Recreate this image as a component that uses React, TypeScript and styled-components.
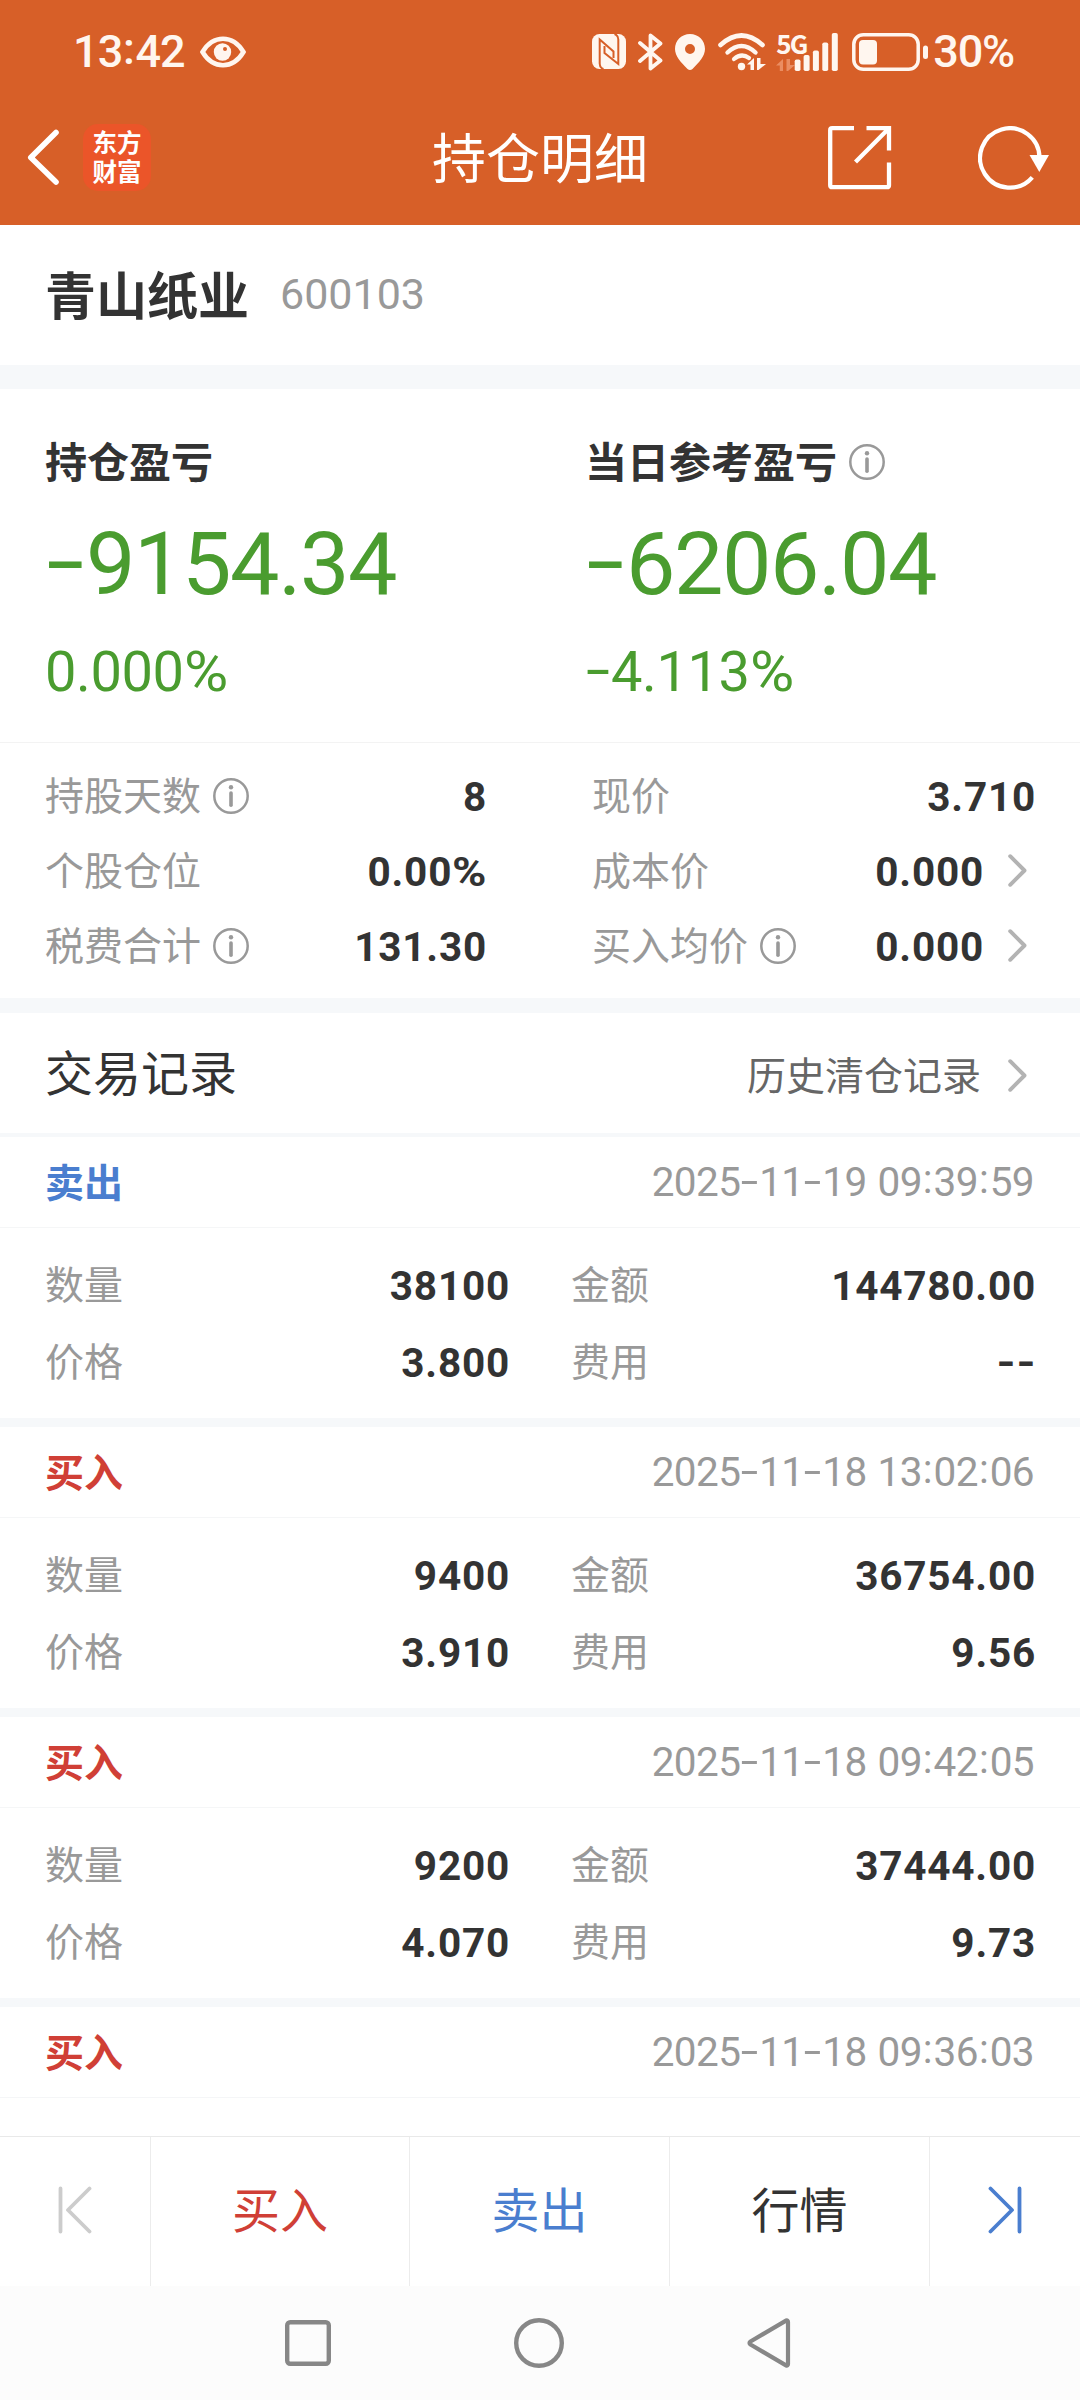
import React from "react";
import styled, { createGlobalStyle } from "styled-components";

const CJK = `"Noto Sans CJK SC", "Noto Sans", sans-serif`;
const NUM = `Roboto, "Noto Sans CJK SC", sans-serif`;

const GlobalStyle = createGlobalStyle`
  * { box-sizing: border-box; }
  body { margin: 0; background: #ffffff; }
`;

const Screen = styled.div`
  display: flex;
  flex-direction: column;
  width: 1080px;
  height: 2400px;
  overflow: hidden;
  background: #ffffff;
  color: #333333;
  font-family: ${CJK};
`;

/* ---------- text ---------- */

/* Lifts ideographs so that they sit on the optical centre of their row. */
const Han = styled.span`
  display: block;
  padding-bottom: 0.11em;
`;

const FigureText = styled.span<{
  $size: number;
  $weight?: number;
  $color?: string;
  $spacing?: number;
  $drop?: number;
}>`
  padding-top: ${(p) => p.$drop ?? 0}px;
  font-family: ${NUM};
  font-size: ${(p) => p.$size}px;
  font-weight: ${(p) => p.$weight ?? 400};
  color: ${(p) => p.$color ?? "#333333"};
  letter-spacing: ${(p) => p.$spacing ?? 0}px;
  word-spacing: 1.5px;
  line-height: 1;
  white-space: nowrap;
`;

const Dash = styled.span<{ $bold: boolean }>`
  display: inline-block;
  width: ${(p) => (p.$bold ? 0.5 : 0.465)}em;
  letter-spacing: 0;
  text-align: center;
  transform: translateY(-0.03em) scaleX(${(p) => (p.$bold ? 1.2 : 1.55)});
`;

const Colon = styled.span`
  display: inline-block;
  width: 0.29em;
  letter-spacing: 0;
  text-align: center;
  transform: translateY(-0.07em);
`;

const Percent = styled.span<{ $bold: boolean }>`
  display: inline-block;
  letter-spacing: 0;
  transform: scaleX(${(p) => (p.$bold ? 1.15 : 1.08)});
  transform-origin: left;
  margin-right: ${(p) => (p.$bold ? 0.12 : 0.06)}em;
`;

type FigureProps = {
  text: string;
  size: number;
  weight?: number;
  color?: string;
  spacing?: number;
  drop?: number;
};

function Figure({ text, size, weight = 400, color, spacing, drop }: FigureProps) {
  return (
    <FigureText $size={size} $weight={weight} $color={color} $spacing={spacing} $drop={drop}>
      {text.split(/([-:%])/).map((part, i) => {
        if (part === "-") return <Dash key={i} $bold={weight > 500}>-</Dash>;
        if (part === ":") return <Colon key={i}>:</Colon>;
        if (part === "%" && weight !== 500) return <Percent key={i} $bold={weight > 500}>%</Percent>;
        return part;
      })}
    </FigureText>
  );
}

/* ---------- header ---------- */

const Header = styled.header`
  display: flex;
  flex-direction: column;
  flex: none;
  height: 225px;
  background: #d75f28;
`;

const StatusBar = styled.div`
  display: flex;
  align-items: center;
  justify-content: space-between;
  height: 89px;
  padding: 14px 66px 0 73px;
`;

const StatusGroup = styled.div<{ $gap: number }>`
  display: flex;
  align-items: center;
  gap: ${(p) => p.$gap}px;
`;

const Spacer = styled.i<{ $w: number }>`
  margin-left: ${(p) => p.$w}px;
`;

const NavBar = styled.div`
  display: grid;
  grid-template-columns: 1fr auto 1fr;
  align-items: center;
  height: 136px;
`;

const NavLeft = styled.div`
  display: flex;
  align-items: center;
  gap: 24px;
  padding-left: 27px;
`;

const NavRight = styled.div`
  display: flex;
  align-items: center;
  justify-content: flex-end;
  gap: 86px;
  padding: 1px 30px 0 0;
`;

const Title = styled.h1`
  margin: 0;
  padding-bottom: 2px;
  color: #ffffff;
  font-size: 54px;
  font-weight: 400;
  line-height: 70px;
`;

const Logo = styled.div`
  display: flex;
  flex-direction: column;
  align-items: center;
  justify-content: center;
  width: 68px;
  height: 67px;
  padding-top: 2px;
  border-radius: 15px;
  background: #eb5529;
  color: #ffffff;
  font-family: ${NUM};
  font-size: 24.5px;
  font-weight: 700;
  line-height: 29px;
`;

/* ---------- body ---------- */

const Band = styled.div<{ $h: number }>`
  flex: none;
  height: ${(p) => p.$h}px;
  background: #f6f8fa;
`;

const StockHead = styled.section`
  display: flex;
  align-items: center;
  flex: none;
  gap: 31px;
  height: 140px;
  padding: 0 46px 5px 45px;
`;

const StockName = styled.h2`
  margin: 0;
  font-size: 51px;
  font-weight: 700;
  line-height: 60px;
`;

const Profit = styled.section`
  display: grid;
  grid-template-columns: 540px 1fr;
  flex: none;
  height: 354px;
  padding: 49px 45px 0;
  border-bottom: 1px solid #f3f3f3;
`;

const ProfitCell = styled.div`
  display: flex;
  flex-direction: column;
  align-items: flex-start;
`;

const ProfitLabel = styled.div`
  display: flex;
  align-items: center;
  gap: 12px;
  height: 48px;
  font-size: 42px;
  font-weight: 700;
  line-height: 46px;
`;

const ProfitValue = styled.div`
  display: flex;
  align-items: center;
  height: 100px;
  margin-top: 28px;
`;

const ProfitRate = styled.div`
  display: flex;
  align-items: center;
  height: 60px;
  margin-top: 27px;
`;

const Details = styled.section`
  display: grid;
  grid-template-columns: 440px 442px;
  justify-content: space-between;
  grid-auto-rows: 75px;
  flex: none;
  height: 255px;
  padding: 15px 46px 0 45px;
`;

const Pair = styled.div`
  display: flex;
  align-items: center;
  justify-content: space-between;
`;

const Label = styled.span<{ $color?: string }>`
  display: flex;
  align-items: center;
  gap: 12px;
  color: ${(p) => p.$color ?? "#999999"};
  font-size: 39px;
  line-height: 44px;
  white-space: nowrap;
`;

const ValueLink = styled.span`
  display: flex;
  align-items: center;
  gap: 26px;
  padding-right: 7px;
`;

const BoldWrap = styled.span`
  display: flex;
  margin-right: -2px;
`;

const SectionHead = styled.section`
  display: flex;
  align-items: center;
  justify-content: space-between;
  flex: none;
  height: 120px;
  padding: 0 53px 0 45px;
`;

const SectionTitle = styled.h3`
  margin: 0;
  font-size: 48px;
  font-weight: 400;
  line-height: 60px;
`;

const MoreLink = styled.span`
  display: flex;
  align-items: center;
  gap: 27px;
  padding-top: 5px;
`;

const Records = styled.main`
  flex: 1;
  min-height: 0;
  overflow: hidden;
`;

const RecordHead = styled.div`
  display: flex;
  align-items: center;
  justify-content: space-between;
  height: 91px;
  padding: 0 46px 0 45px;
  border-bottom: 1px solid #f5f6f7;
`;

const Side = styled.span<{ $color: string }>`
  color: ${(p) => p.$color};
  font-size: 39px;
  font-weight: 700;
  line-height: 44px;
`;

const RecordBody = styled.div`
  display: grid;
  grid-template-columns: 463px 463px;
  justify-content: space-between;
  grid-auto-rows: 77px;
  height: 190px;
  padding: 18px 46px 0 45px;
`;

const ActionBar = styled.footer`
  display: grid;
  grid-template-columns: 151px 259px 260px 260px 150px;
  flex: none;
  height: 150px;
  border-top: 1px solid #e9e9e9;
  background: #ffffff;
`;

const Action = styled.div<{ $color?: string; $last?: boolean }>`
  display: flex;
  align-items: center;
  justify-content: center;
  padding-bottom: 3px;
  border-right: ${(p) => (p.$last ? "none" : "1px solid #ececec")};
  color: ${(p) => p.$color ?? "#333333"};
  font-size: 48px;
  line-height: 56px;
`;

const SystemNav = styled.nav`
  display: flex;
  align-items: center;
  justify-content: center;
  flex: none;
  gap: 183px;
  height: 114px;
  padding-right: 4px;
  background: #fcfcfc;
`;

/* ---------- icons ---------- */

const STATUS = "#fff6ef";

const EyeIcon = () => (
  <svg width="46" height="32" viewBox="0 0 46 32" fill="none">
    <path d="M2.5 16C8 7 15 2.8 23 2.8S38 7 43.500 16C38 25 31 29.200 23 29.200S8 25 2.500 16Z" stroke={STATUS} strokeWidth="4.6" />
    <circle cx="22.500" cy="16" r="8.700" fill={STATUS} />
    <circle cx="25" cy="13" r="2" fill="#d75f28" />
  </svg>
);

const NfcIcon = () => (
  <svg width="34" height="35" viewBox="0 0 34 35">
    <rect width="34" height="35" rx="7.500" fill={STATUS} />
    <path d="M11.500 35C8.500 34 7.700 32 7.700 29.500V5.500L21.500 17.500V24" fill="none" stroke="#d75f28" strokeWidth="2" />
    <path d="M22.500 0C25.500 1 26.300 3 26.300 5.500V30L12.500 19V12" fill="none" stroke="#d75f28" strokeWidth="2" />
  </svg>
);

const BluetoothIcon = () => (
  <svg width="26" height="38" viewBox="0 0 26 38" fill="none">
    <path d="M2 10L22.500 27.500L12.500 35.500V2.500L22.500 10.500L2 28" stroke={STATUS} strokeWidth="3.800" strokeLinejoin="round" strokeLinecap="round" />
  </svg>
);

const PinIcon = () => (
  <svg width="30" height="36" viewBox="0 0 30 36">
    <path fillRule="evenodd" fill={STATUS} d="M15 0C6.500 0 0 6.500 0 15C0 22 6 28.500 12.500 35Q15 37 17.500 35C24 28.500 30 22 30 15C30 6.500 23.500 0 15 0ZM15 10A5 5 0 1 1 15 20A5 5 0 1 1 15 10Z" />
  </svg>
);

const WifiIcon = () => (
  <svg width="48" height="38" viewBox="0 0 48 38" fill="none">
    <path d="M2.500 12Q23.500 -7 44.500 12" stroke={STATUS} strokeWidth="4.600" strokeLinecap="round" />
    <path d="M9.500 19.500Q23.500 6.500 37.500 19.500" stroke={STATUS} strokeWidth="4.400" strokeLinecap="round" />
    <path d="M16 26Q23.500 19.500 31 25" stroke={STATUS} strokeWidth="4.200" strokeLinecap="round" />
    <circle cx="23.500" cy="33.500" r="3.700" fill={STATUS} />
    <path d="M29 31.500L36 25V37H32.500V31.500ZM39 25V37H40.500L48 31H42.500V25Z" fill={STATUS} />
  </svg>
);

const NetBox = styled.div`
  display: flex;
  flex-direction: column;
  justify-content: space-between;
  width: 27px;
  height: 38px;
`;

const NetLabel = styled.span`
  color: ${STATUS};
  font-family: "Noto Sans CJK SC", sans-serif;
  font-size: 26px;
  font-weight: 700;
  letter-spacing: -2px;
  line-height: 20px;
  white-space: nowrap;
`;

const DataArrows = () => (
  <svg width="19" height="12" viewBox="0 0 19 12">
    <path d="M0 6.500L7 0V12H3.800V6.500ZM10.500 0V12H12L19 6H14V0Z" fill="#ea8d62" />
  </svg>
);

const SignalIcon = () => (
  <svg width="44" height="38" viewBox="796 31.500 44 38" fill={STATUS}>
    <rect x="796.700" y="58" width="5.800" height="11.500" rx="1.800" />
    <rect x="805.600" y="53.500" width="6" height="16" rx="1.800" />
    <rect x="814.900" y="49" width="6" height="20.500" rx="1.800" />
    <rect x="824.300" y="41" width="5.900" height="28.500" rx="1.800" />
    <rect x="833.800" y="31.500" width="6" height="38" rx="1.800" />
  </svg>
);

const BatteryIcon = () => (
  <svg width="76" height="38" viewBox="0 0 76 38" fill="none">
    <rect x="1.800" y="1.800" width="64.400" height="34.400" rx="9.500" stroke={STATUS} strokeWidth="3.500" />
    <rect x="7" y="7" width="18" height="24.500" rx="4" fill={STATUS} />
    <rect x="71" y="12.500" width="5" height="13.500" rx="2.500" fill={STATUS} />
  </svg>
);

const BackIcon = () => (
  <svg width="32" height="56" viewBox="0 0 32 56" fill="none">
    <path d="M29 3.500L3.800 28.500L29 53" stroke="#fff" strokeWidth="5.600" strokeLinecap="round" strokeLinejoin="round" />
  </svg>
);

const ShareIcon = () => (
  <svg width="64" height="64" viewBox="0 0 64 64" fill="none" stroke="#fff" strokeWidth="4.300">
    <path d="M26 2.200H4.200Q2.200 2.200 2.200 4.200V59.200Q2.200 61.200 4.200 61.200H59Q61 61.200 61 59.200V36.500" />
    <path d="M38.500 2.200H61V24.500M61 2.200L27.500 36" />
  </svg>
);

const RefreshIcon = () => (
  <svg width="72" height="64" viewBox="0 0 72 64" fill="none">
    <path d="M54.300 51.300A29.700 29.700 0 1 1 61.500 32" stroke="#fff" strokeWidth="4.200" />
    <path d="M51.500 29H71L61.300 46Z" fill="#fff" />
  </svg>
);

const InfoIcon = () => (
  <svg width="36" height="36" viewBox="0 0 36 36" fill="none">
    <circle cx="18" cy="18" r="16.700" stroke="#999" strokeWidth="2.500" />
    <circle cx="18" cy="9.300" r="2.200" fill="#999" />
    <path d="M18 15V27.200" stroke="#999" strokeWidth="3.600" strokeLinecap="round" />
  </svg>
);

const ChevronIcon = () => (
  <svg width="19" height="33" viewBox="0 0 19 33" fill="none">
    <path d="M2.200 2.200L16.500 16.500L2.200 30.800" stroke="#b3b3b3" strokeWidth="3.900" strokeLinecap="round" strokeLinejoin="round" />
  </svg>
);

const EndIcon = ({ color, flip }: { color: string; flip?: boolean }) => (
  <svg width="34" height="48" viewBox="0 0 34 48" fill="none">
    <g transform={flip ? "translate(34 0) scale(-1 1)" : undefined}>
      <path d="M2.500 2.500V45.500M31.500 2.500L10 24L31.500 45.500" stroke={color} strokeWidth="3.800" strokeLinecap="round" strokeLinejoin="round" />
    </g>
  </svg>
);

const RecentsIcon = () => (
  <svg width="46" height="46" viewBox="0 0 46 46" fill="none">
    <rect x="2.200" y="2.200" width="41.600" height="41.600" rx="3" stroke="#878787" strokeWidth="4.400" />
  </svg>
);

const HomeIcon = () => (
  <svg width="50" height="50" viewBox="0 0 50 50" fill="none">
    <circle cx="25" cy="25" r="22.800" stroke="#878787" strokeWidth="4.400" />
  </svg>
);

const ReturnIcon = () => (
  <svg width="44" height="50" viewBox="0 0 44 50" fill="none">
    <path d="M39 2.600Q41 2 41 4V46Q41 48 39 47.400L3.500 26.500Q1.500 25 3.500 23.500Z" stroke="#878787" strokeWidth="4.200" strokeLinejoin="round" />
  </svg>
);

/* ---------- data ---------- */

type Detail = { label: string; value: string; info?: boolean; link?: boolean };

const details: Detail[] = [
  { label: "持股天数", value: "8", info: true },
  { label: "现价", value: "3.710" },
  { label: "个股仓位", value: "0.00%" },
  { label: "成本价", value: "0.000", link: true },
  { label: "税费合计", value: "131.30", info: true },
  { label: "买入均价", value: "0.000", info: true, link: true },
];

type Trade = {
  side: "买入" | "卖出";
  time: string;
  qty: string;
  amount: string;
  price: string;
  fee: string;
};

const trades: Trade[] = [
  { side: "卖出", time: "2025-11-19 09:39:59", qty: "38100", amount: "144780.00", price: "3.800", fee: "--" },
  { side: "买入", time: "2025-11-18 13:02:06", qty: "9400", amount: "36754.00", price: "3.910", fee: "9.56" },
  { side: "买入", time: "2025-11-18 09:42:05", qty: "9200", amount: "37444.00", price: "4.070", fee: "9.73" },
];

const GREEN = "#4a9c2f";
const RED = "#d03f36";
const BLUE = "#4a7ecf";

const BoldFigure = ({ text }: { text: string }) => (
  <BoldWrap>
    <Figure text={text} size={40.5} weight={700} spacing={0.8} drop={3} />
  </BoldWrap>
);

const TradeHead = ({ side, time }: { side: string; time: string }) => (
  <RecordHead>
    <Side $color={side === "买入" ? RED : BLUE}>
      <Han>{side}</Han>
    </Side>
    <Figure text={time} size={40.5} color="#999999" spacing={-0.6} drop={1} />
  </RecordHead>
);

const Field = ({ name, value }: { name: string; value: string }) => (
  <Pair>
    <Label>
      <Han>{name}</Han>
    </Label>
    <BoldFigure text={value} />
  </Pair>
);

export default function App() {
  return (
    <>
      <GlobalStyle />
      <Screen>
        <Header>
          <StatusBar>
            <StatusGroup $gap={15}>
              <Figure text="13:42" size={45} weight={500} color={STATUS} spacing={-0.9} />
              <EyeIcon />
            </StatusGroup>
            <StatusGroup $gap={0}>
              <NfcIcon />
              <Spacer $w={12} />
              <BluetoothIcon />
              <Spacer $w={11} />
              <PinIcon />
              <Spacer $w={13} />
              <WifiIcon />
              <Spacer $w={10} />
              <NetBox>
                <NetLabel>5G</NetLabel>
                <DataArrows />
              </NetBox>
              <Spacer $w={-9} />
              <SignalIcon />
              <Spacer $w={14} />
              <BatteryIcon />
              <Spacer $w={5} />
              <Figure text="30%" size={45} weight={500} color={STATUS} spacing={-1.2} />
            </StatusGroup>
          </StatusBar>
          <NavBar>
            <NavLeft>
              <BackIcon />
              <Logo>
                <span>东方</span>
                <span>财富</span>
              </Logo>
            </NavLeft>
            <Title>持仓明细</Title>
            <NavRight>
              <ShareIcon />
              <RefreshIcon />
            </NavRight>
          </NavBar>
        </Header>

        <StockHead>
          <StockName>青山纸业</StockName>
          <Figure text="600103" size={43} color="#999999" drop={4} />
        </StockHead>
        <Band $h={24} />

        <Profit>
          <ProfitCell>
            <ProfitLabel>
              <Han>持仓盈亏</Han>
            </ProfitLabel>
            <ProfitValue>
              <Figure text="-9154.34" size={88} color={GREEN} spacing={-1.4} />
            </ProfitValue>
            <ProfitRate>
              <Figure text="0.000%" size={56} color={GREEN} spacing={-0.4} drop={2} />
            </ProfitRate>
          </ProfitCell>
          <ProfitCell>
            <ProfitLabel>
              <Han>当日参考盈亏</Han>
              <InfoIcon />
            </ProfitLabel>
            <ProfitValue>
              <Figure text="-6206.04" size={88} color={GREEN} spacing={-1.4} />
            </ProfitValue>
            <ProfitRate>
              <Figure text="-4.113%" size={56} color={GREEN} spacing={-0.4} drop={2} />
            </ProfitRate>
          </ProfitCell>
        </Profit>

        <Details>
          {details.map((d) => (
            <Pair key={d.label}>
              <Label>
                <Han>{d.label}</Han>
                {d.info && <InfoIcon />}
              </Label>
              {d.link ? (
                <ValueLink>
                  <BoldFigure text={d.value} />
                  <ChevronIcon />
                </ValueLink>
              ) : (
                <BoldFigure text={d.value} />
              )}
            </Pair>
          ))}
        </Details>
        <Band $h={15} />

        <SectionHead>
          <SectionTitle>
            <Han>交易记录</Han>
          </SectionTitle>
          <MoreLink>
            <Label $color="#666666">
              <Han>历史清仓记录</Han>
            </Label>
            <ChevronIcon />
          </MoreLink>
        </SectionHead>
        <Band $h={4} />

        <Records>
          {trades.map((t) => (
            <article key={t.time}>
              <TradeHead side={t.side} time={t.time} />
              <RecordBody>
                <Field name="数量" value={t.qty} />
                <Field name="金额" value={t.amount} />
                <Field name="价格" value={t.price} />
                <Field name="费用" value={t.fee} />
              </RecordBody>
              <Band $h={9} />
            </article>
          ))}
          <TradeHead side="买入" time="2025-11-18 09:36:03" />
        </Records>

        <ActionBar>
          <Action><EndIcon color="#cccccc" /></Action>
          <Action $color={RED}><Han>买入</Han></Action>
          <Action $color={BLUE}><Han>卖出</Han></Action>
          <Action><Han>行情</Han></Action>
          <Action $last><EndIcon color={BLUE} flip /></Action>
        </ActionBar>

        <SystemNav>
          <RecentsIcon />
          <HomeIcon />
          <ReturnIcon />
        </SystemNav>
      </Screen>
    </>
  );
}
